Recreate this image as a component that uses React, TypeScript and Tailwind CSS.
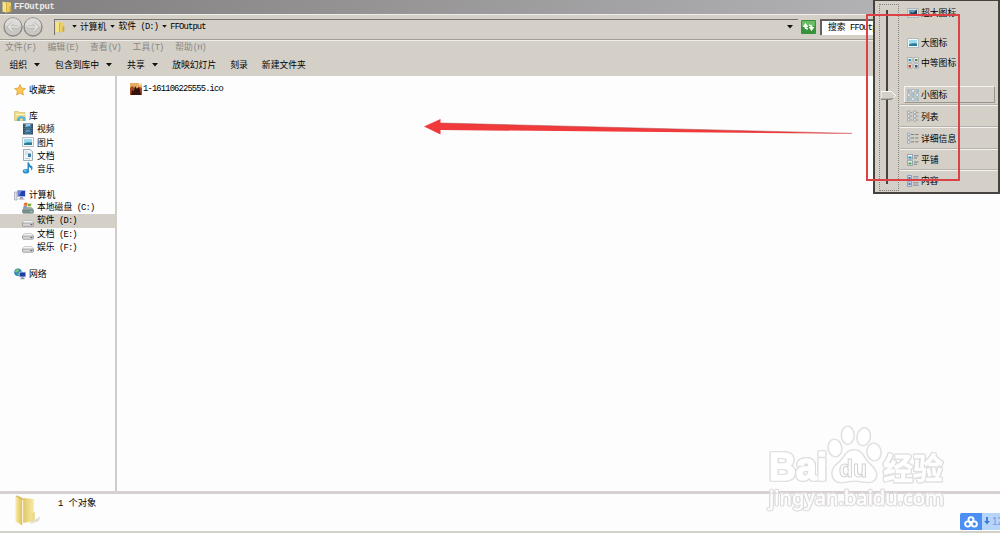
import type { ReactNode } from "react";
import clsx from "clsx";

// Chinese glyphs are full width, everything else is set in a half-width mono face.
function T({ children, className }: { children: string; className?: string }) {
  const runs = children.match(/[\u4e00-\u9fff]+|[^\u4e00-\u9fff]+/g) ?? [];
  return (
    <span className={clsx("whitespace-pre", className)}>
      {runs.map((run, i) =>
        /[\u4e00-\u9fff]/.test(run) ? (
          <span key={i}>{run}</span>
        ) : (
          <span
            key={i}
            className="font-['Liberation_Mono',monospace] text-[8.8px] tracking-[-0.84px]"
          >
            {run}
          </span>
        )
      )}
    </span>
  );
}

function Caret({ className, small }: { className?: string; small?: boolean }) {
  return (
    <svg
      viewBox="0 0 6 4"
      className={clsx("shrink-0", small ? "h-[3px] w-[5px]" : "h-[4px] w-[6px]", className)}
    >
      <path d="M0 0h6L3 3.6z" fill="#111" />
    </svg>
  );
}

function FolderIcon({ className }: { className?: string }) {
  return (
    <svg viewBox="0 0 28 32" className={className}>
      <defs>
        <linearGradient id="fold" x1="0" x2="1">
          <stop offset="0" stopColor="#f8ecaa" />
          <stop offset="1" stopColor="#dfbf58" />
        </linearGradient>
        <linearGradient id="foldBack" x1="0" x2="1">
          <stop offset="0" stopColor="#e2c768" />
          <stop offset="1" stopColor="#f7eaa6" />
        </linearGradient>
      </defs>
      <path d="M16 29l11-7-2 5-9 3z" fill="#999" opacity=".3" />
      <path d="M9 3l11 1v23l-11 2z" fill="url(#foldBack)" />
      <path d="M18 19l3-2v9l-4 2z" fill="#efdc8a" />
      <path d="M1 1l7 5.5v25L1 27z" fill="url(#fold)" />
      <path d="M1 1l2-.5 6 3-1 3z" fill="#d9bc5e" />
    </svg>
  );
}

function SmallFolderIcon() {
  return (
    <svg viewBox="0 0 10 12" className="h-[12px] w-[10px] shrink-0">
      <path d="M3.5 1L9 1.600v8.900l-5.500 1z" fill="#ead06a" />
      <path d="M7.500 5.500l1.800-.5v5.500l-2 .5z" fill="#d2aa3e" />
      <path d="M.5.500L5 2v9.700L.5 10.600z" fill="#f6e486" />
      <path d="M4.200 1.800L5 2v9.700l-.8-.2z" fill="#c9a23c" />
    </svg>
  );
}

function StarIcon() {
  return (
    <svg viewBox="0 0 12 12" className="size-[12px]">
      <path
        d="M6 .6l1.6 3.5 3.8.4-2.8 2.6.8 3.9L6 9.1 2.6 11l.8-3.9L.6 4.5l3.8-.4z"
        fill="#fcc84c"
        stroke="#d99a3c"
        strokeWidth=".8"
      />
    </svg>
  );
}

function LibraryIcon() {
  return (
    <svg viewBox="0 0 12 12" className="size-[12px]">
      <path d="M.5 1.5h4l1 1h5.500v8H.5z" fill="#f0dc88" stroke="#cdb766" strokeWidth=".6" />
      <path d="M2 4h9v1H2z" fill="#fff8d0" />
      <path d="M3 11V8.500q3-4.500 8.500-1V11H9V9Q7.500 7.500 6 9v2z" fill="#57b4dc" />
    </svg>
  );
}

function VideoIcon() {
  return (
    <svg viewBox="0 0 12 12" className="size-[12px]">
      <path d="M1 .5h10v11H1z" fill="#34495c" />
      <path d="M3.500 1h5v4.500h-5z" fill="#8ccdee" />
      <path d="M3.500 6.500h5V11h-5z" fill="#5699bd" />
      <path d="M3.500 4l5-1v2.500h-5zM3.500 9.500l5-1V11h-5z" fill="#2c6c91" />
      <path d="M2.200 1v10M9.800 1v10" stroke="#a3b1bc" strokeWidth=".6" strokeDasharray="1 1" />
    </svg>
  );
}

function PictureIcon({ dark }: { dark?: boolean }) {
  return (
    <svg viewBox="0 0 12 12" className="size-[12px]">
      <path d="M.5 1.500h11v9H.5z" fill={dark ? "#d5dfe4" : "#f3f8fa"} stroke="#9ba9ae" strokeWidth=".7" />
      <path d="M2 3h8v6H2z" fill={dark ? "#5f9cc0" : "#9bd9ec"} />
      <path d="M2 7.500q4-2 8-1V9H2z" fill="#297c99" />
      {dark && <path d="M3 5l3 1 4-3.500V7L8 8H4z" fill="#263e50" />}
    </svg>
  );
}

function DocIcon() {
  return (
    <svg viewBox="0 0 12 12" className="size-[12px]">
      <path d="M1.500.5h7l2 2v9h-9z" fill="#f0f5f8" stroke="#8999a3" strokeWidth=".8" />
      <path d="M3 3h3M3 5h3M3 9.500h5" stroke="#a9c0cc" strokeWidth=".7" />
      <path d="M6 4.500h3v3.500H6z" fill="#3c7faa" />
      <path d="M8.500.5v2h2" fill="#cfdbe1" />
    </svg>
  );
}

function MusicIcon() {
  return (
    <svg viewBox="0 0 12 12" className="size-[12px]">
      <path d="M5.500.3h1.300Q7.500 3 10 4.200 11.500 6 9.200 8.700 9.500 5.800 7 5v4.500H5.500z" fill="#2989c9" />
      <ellipse cx="4" cy="9.300" rx="3.200" ry="2.300" fill="#2f8fd0" />
      <ellipse cx="3.300" cy="8.800" rx="1.300" ry=".8" fill="#9bd7f5" />
    </svg>
  );
}

function ComputerIcon() {
  return (
    <svg viewBox="0 0 12 12" className="size-[12px]">
      <path d="M.5 3h2.500v8H.5z" fill="#dfe3ea" stroke="#8e959f" strokeWidth=".6" />
      <path d="M3 1h8.700v7H3z" fill="#c7cde0" />
      <path d="M3.800 1.800h7.200v5.400H3.800z" fill="#243fb0" />
      <path d="M3.800 1.800h4L5 7.200H3.800z" fill="#6586e0" />
      <path d="M6 8h3v1.500h1.500v1h-6v-1H6z" fill="#9ba3b4" />
    </svg>
  );
}

function DriveIcon({ system }: { system?: boolean }) {
  return (
    <svg viewBox="0 0 12 12" className="size-[12px]">
      {system && (
        <>
          <path d="M2 1.200Q4 0 5.500 1L5 4Q3.500 3.200 1.600 4z" fill="#e8702e" />
          <path d="M6 1.200q2 1 3.500 0L9 4q-1.800.8-3.500 0z" fill="#73b43c" />
          <path d="M1.500 4.500Q3.500 3.700 5 4.500v3H1z" fill="#3b8fd8" />
          <path d="M5.500 4.500q1.500.8 3.400.2L8.500 8h-3z" fill="#f5c93c" />
        </>
      )}
      <path
        d="M2.800 5.500h6.400q1 0 1.500 1l.8 2H.5l.8-2q.5-1 1.500-1z"
        fill={system ? "#8fa9a5" : "#f4f4f4"}
        stroke="#a5a5a8"
        strokeWidth=".5"
      />
      <path
        d="M.5 8h11v2.300q0 1-1 1h-9q-1 0-1-1z"
        fill={system ? "#72918f" : "#d4d4d6"}
        stroke="#808083"
        strokeWidth=".6"
      />
      <path d="M8.500 9.600h1.800" stroke={system ? "#a8f07a" : "#555"} strokeWidth="1" />
    </svg>
  );
}

function NetworkIcon() {
  return (
    <svg viewBox="0 0 12 12" className="size-[12px]">
      <circle cx="4" cy="4.200" r="3.800" fill="#2e86c4" />
      <path d="M2 1.500q3-1 3 1L3 4.500.7 4zM3 6l2-1 .5 2.500z" fill="#7cc46b" />
      <path d="M5 3.800h7v5.400H5z" fill="#c5cee3" />
      <path d="M5.700 4.500h5.600v4H5.700z" fill="#1c3ba6" />
      <path d="M7.500 9h2v1.200h1.200v1H6.300v-1h1.200z" fill="#8a94aa" />
    </svg>
  );
}

const places: ({ text: string; icon: ReactNode; child?: boolean; selected?: boolean } | null)[] = [
  { text: "收藏夹", icon: <StarIcon /> },
  null,
  { text: "库", icon: <LibraryIcon /> },
  { text: "视频", icon: <VideoIcon />, child: true },
  { text: "图片", icon: <PictureIcon />, child: true },
  { text: "文档", icon: <DocIcon />, child: true },
  { text: "音乐", icon: <MusicIcon />, child: true },
  null,
  { text: "计算机", icon: <ComputerIcon /> },
  { text: "本地磁盘 (C:)", icon: <DriveIcon system />, child: true },
  { text: "软件 (D:)", icon: <DriveIcon />, child: true, selected: true },
  { text: "文档 (E:)", icon: <DriveIcon />, child: true },
  { text: "娱乐 (F:)", icon: <DriveIcon />, child: true },
  null,
  { text: "网络", icon: <NetworkIcon /> },
];

function Sidebar() {
  return (
    <aside className="w-[115px] shrink-0 pt-[7px]">
      {places.map((p, i) =>
        p ? (
          <div
            key={i}
            className={clsx(
              "flex h-[13.15px] items-center gap-[3px]",
              p.child ? "pl-[22px]" : "pl-[14px]",
              p.selected && "bg-[#d4d0c8]"
            )}
          >
            {p.icon}
            <T>{p.text}</T>
          </div>
        ) : (
          <div key={i} className="h-[13.15px]" />
        )
      )}
    </aside>
  );
}

function GridIcon({ kind }: { kind: "medium" | "small" | "list" | "details" | "tiles" | "content" }) {
  return (
    <svg viewBox="0 0 12 12" className="size-[12px]">
      {kind === "medium" && (
        <>
          <path d="M.5.5h4.500v4.500H.5zM7 .5h4.500v4.500H7zM.5 6.800h4.500v4.500H.5zM7 6.800h4.500v4.500H7z" fill="#f5f7f7" stroke="#8b9499" strokeWidth=".6" />
          <path d="M1.500 2h2.500v2H1.500z" fill="#2f8db5" />
          <path d="M8 2h2.500v2H8z" fill="#57883e" />
          <path d="M1.500 8h2.500v2.500H1.500z" fill="#b3412d" />
          <path d="M8 8h2.500v2.500H8z" fill="#3d596c" />
        </>
      )}
      {kind === "small" && (
        <>
          <path d="M.5.5h2.600v2.600H.5zM4.700.5h2.600v2.600H4.700zM8.900.5h2.600v2.600H8.900zM.5 4.700h2.600v2.600H.5zM4.700 4.700h2.600v2.600H4.700zM8.900 4.700h2.600v2.600H8.900zM.5 8.900h2.600v2.600H.5zM4.700 8.900h2.600v2.600H4.700zM8.900 8.900h2.600v2.600H8.900z" fill="#f2f9fc" stroke="#7f9bac" strokeWidth=".6" />
          <path d="M1.800 1.200v1.500M6 5.200v1.500M10.200 9.400v1.500M10.200 1.200v1.500M1.800 9.400v1.500" stroke="#3a7193" strokeWidth=".8" />
        </>
      )}
      {kind === "list" && (
        <>
          <path d="M.5 1h2.500v2.500H.5zM6.500 1h2.500v2.500H6.500zM.5 4.800h2.500v2.500H.5zM6.500 4.800h2.500v2.500H6.500zM.5 8.600h2.500v2.500H.5zM6.500 8.600h2.500v2.500H6.500z" fill="#eaf0f2" stroke="#7d8b98" strokeWidth=".6" />
          <path d="M3.500 2.500h1.800M9.500 2.500h2M3.500 6h1.800M9.500 6h2M3.500 10h1.800M9.500 10h2" stroke="#868b8e" strokeWidth=".8" />
        </>
      )}
      {kind === "details" && (
        <>
          <path d="M.5 1h2.500v2.500H.5zM.5 4.800h2.500v2.500H.5zM.5 8.600h2.500v2.500H.5z" fill="#e3e9f3" stroke="#7d8da8" strokeWidth=".6" />
          <path d="M4 2.500h7.500M4 6h7.500M4 9.800h7.500" stroke="#707478" strokeWidth=".9" strokeDasharray="3.200 1" />
        </>
      )}
      {kind === "tiles" && (
        <>
          <path d="M.5.5h5v4.700h-5zM.5 6.700h5v4.700h-5z" fill="#f4f9fb" stroke="#6f8a9b" strokeWidth=".7" />
          <path d="M1.500 2.500h3v2h-3z" fill="#2788b6" />
          <path d="M1.500 8.500h3v2h-3z" fill="#4f9b4f" />
          <path d="M7 1.800h4.500M7 4h3M7 8h4.500M7 10.200h3" stroke="#666a6c" strokeWidth=".8" />
        </>
      )}
      {kind === "content" && (
        <>
          <path d="M.5.5h4v4.700h-4zM.5 6.700h4v4.700h-4z" fill="#cfdcf0" stroke="#7187aa" strokeWidth=".7" />
          <path d="M1.500 2h2v2h-2zM1.500 8h2v2h-2z" fill="#4c73aa" />
          <path d="M6 1.500h5.500M6 3h5.500M6 4.500h5.500M6 7.500h5.500M6 9h5.500M6 10.500h5.500" stroke="#8990ac" strokeWidth=".8" />
        </>
      )}
    </svg>
  );
}

const viewModes: { text: string; icon: ReactNode; box: string }[] = [
  { text: "超大图标", icon: <PictureIcon dark />, box: "h-[19px]" },
  { text: "大图标", icon: <PictureIcon />, box: "mt-[11px] h-[19px]" },
  { text: "中等图标", icon: <GridIcon kind="medium" />, box: "mt-[1px] h-[19px]" },
  {
    text: "小图标",
    icon: <GridIcon kind="small" />,
    box: "mt-[14px] mr-[3px] ml-[4px] h-[17px] border border-t-[#f4f2ee] border-l-[#f4f2ee] border-r-[#98958f] border-b-[#98958f] !pl-[2px]",
  },
  { text: "列表", icon: <GridIcon kind="list" />, box: "mt-[2px] h-[22px] border-t border-[#f4f2ee] pb-[1px] shadow-[0_-1px_0_#b5b2ac]" },
  { text: "详细信息", icon: <GridIcon kind="details" />, box: "h-[22px] border-t border-[#f4f2ee] pb-[1px] shadow-[0_-1px_0_#b5b2ac]" },
  { text: "平铺", icon: <GridIcon kind="tiles" />, box: "h-[21px] border-t border-[#f4f2ee] pb-[1px] shadow-[0_-1px_0_#b5b2ac]" },
  { text: "内容", icon: <GridIcon kind="content" />, box: "h-[21px] border-t border-[#f4f2ee] pb-[1px] shadow-[0_-1px_0_#b5b2ac]" },
];

function ViewMenu() {
  return (
    <div className="absolute top-0 left-[873px] flex h-[194px] w-[127px] border-x-2 border-t border-b-2 border-[#45423f] bg-[#d4d0c8]">
      <div className="relative mt-[3px] ml-[4px] h-[187px] w-[20px] shrink-0 border border-dotted border-[#85827d]">
        <div className="mt-[5px] ml-[6px] h-[174px] w-[2px] bg-[#45423f]" />
        <svg viewBox="0 0 15 9" className="absolute top-[86px] left-[1px] h-[9px] w-[15px]">
          <path d="M0 .5h10.500L14.500 4.500 10.500 8.500H0z" fill="#d4d0c8" />
          <path d="M0 8V.5h10.500l4 4-3 3" fill="none" stroke="#fff" />
          <path d="M0 8.200h10.500l1.500-1.500" fill="none" stroke="#696660" />
        </svg>
      </div>
      <div className="ml-[1px] min-w-0 flex-1 pt-[2px]">
        {viewModes.map((m) => (
          <div key={m.text} className={clsx("flex items-center gap-[2px] pl-[7px]", m.box)}>
            {m.icon}
            <T>{m.text}</T>
          </div>
        ))}
      </div>
    </div>
  );
}

function NavButton({ back }: { back?: boolean }) {
  const arrow = back ? "M15 10H5.500M9.500 6l-4 4 4 4" : "M5 10h9.500M10.500 6l4 4-4 4";
  return (
    <svg viewBox="0 0 20 20" className="size-[20px]">
      <circle cx="10" cy="10" r="9" fill="#c9c7c3" stroke="#8a8884" strokeWidth="1.300" />
      <path d="M2 9a8 8 0 0 1 16 0q-8 3-16 0z" fill="#dddbd7" />
      <path d={arrow} fill="none" stroke="#b5b3af" strokeWidth="3" />
      <path d={arrow} fill="none" stroke="#e6e4e0" strokeWidth="1.600" />
    </svg>
  );
}

// White lettering with a thin grey rim.
function Watermark() {
  return (
    <svg
      viewBox="0 0 190 90"
      className="absolute top-[423px] left-[762px] h-[90px] w-[190px] [filter:drop-shadow(1px_0_0_#dedbdb)_drop-shadow(-1px_0_0_#dedbdb)_drop-shadow(0_1px_0_#e3e0e0)_drop-shadow(0_-1px_0_#e3e0e0)]"
      fill="#fff"
      stroke="#fff"
    >
      <text
        x="7"
        y="57"
        fontSize="39"
        textLength="58"
        lengthAdjust="spacingAndGlyphs"
        strokeWidth="1.600"
        className="font-['Liberation_Sans',sans-serif] font-bold"
      >
        Bai
      </text>
      <g strokeWidth=".4">
        <ellipse cx="73" cy="25" rx="6" ry="8" transform="rotate(-10 73 25)" />
        <ellipse cx="85.700" cy="12.300" rx="5.600" ry="8.200" />
        <ellipse cx="101.700" cy="13.700" rx="5.800" ry="8.200" transform="rotate(12 101.700 13.700)" />
        <ellipse cx="112" cy="29" rx="6.200" ry="8" transform="rotate(-8 112 29)" />
        <path d="M92 27.500C84 27 83 36 76 41C69 46 69 56 76 58.500C82 60 86 57 92 57.500C100 57 106 60.500 111 57.500C117 53 113 46 107 41C101 36 101 28 92 27.500z" />
      </g>
      <text
        x="77"
        y="54"
        fontSize="23"
        textLength="28"
        lengthAdjust="spacingAndGlyphs"
        stroke="#d6d3d3"
        strokeWidth="1.100"
        className="font-['Liberation_Sans',sans-serif] font-bold"
      >
        du
      </text>
      <text
        x="121"
        y="55.500"
        fontSize="30"
        textLength="60"
        strokeWidth=".5"
        className="font-['Noto_Sans_CJK_SC',sans-serif] font-bold"
      >
        经验
      </text>
      <text
        x="7"
        y="82"
        fontSize="20"
        textLength="175"
        lengthAdjust="spacingAndGlyphs"
        strokeWidth=".3"
        className="font-['Noto_Sans',sans-serif]"
      >
        jingyan.baidu.com
      </text>
    </svg>
  );
}

export default function App() {
  return (
    <div className="relative flex h-[533px] w-[1000px] flex-col overflow-hidden bg-[#fdfdfd] font-['Noto_Sans_CJK_SC',sans-serif] text-[8.8px] leading-[13px] text-black">
      <header className="flex h-[14px] shrink-0 items-center gap-[2px] bg-linear-to-r from-[#817f80] to-[#b9b8ba] pl-[2px] text-[#efeeec]">
        <SmallFolderIcon />
        <T className="pb-[2px] font-bold tracking-normal [&>span]:tracking-[-0.2px]">FFOutput</T>
      </header>

      <div className="flex h-[26px] shrink-0 items-center border-t border-b border-t-[#f0eeea] border-b-[#a19e98] bg-[#d4d0c8] pl-[3px]">
        <div className="flex">
          <NavButton back />
          <NavButton />
        </div>
        <div className="ml-[11px] flex h-[16px] w-[744px] items-center border-t border-l border-[#77746f] pb-[2px]">
          <SmallFolderIcon />
          <Caret small className="ml-[7px]" />
          <T className="ml-[3px]">计算机</T>
          <Caret small className="mr-[3px] ml-[4px]" />
          <T>软件 (D:)</T>
          <Caret small className="mr-[3px] ml-[4px]" />
          <T>FFOutput</T>
          <Caret className="mr-[5px] ml-auto" />
        </div>
        <svg viewBox="0 0 15 14" className="ml-[3px] h-[14px] w-[15px]">
          <rect width="15" height="14" rx="1" fill="#36933c" />
          <path d="M1 1h13v5H1z" fill="#69bd62" />
          <path d="M4.500 3L1.500 7H3.500v.5q0 2 3.500 2V8q-1.500 0-1.500-1H7.500zM10.500 11l3-4H11.500v-.5q0-2-3.500-2V6q1.500 0 1.500 1H7.500z" fill="#f7fff3" />
        </svg>
        <div className="ml-[4px] flex h-[16px] w-[60px] items-center overflow-hidden border-t-2 border-l-2 border-[#63605d] bg-[#fdfdfd] pb-[2px] pl-[6px]">
          <T>搜索 FFOutput</T>
        </div>
      </div>

      <nav className="flex h-[14px] shrink-0 items-center gap-[11.600px] border-t border-[#efede9] bg-[#d4d0c8] pb-[1px] pl-[5px] text-[#8a8782]">
        {["文件(F)", "编辑(E)", "查看(V)", "工具(T)", "帮助(H)"].map((m) => (
          <T key={m}>{m}</T>
        ))}
      </nav>

      <div className="flex h-[22px] shrink-0 items-center bg-[#d4d0c8] pb-[1px] pl-[9.500px]">
        <T>组织</T>
        <Caret className="ml-[7px]" />
        <T className="ml-[15px]">包含到库中</T>
        <Caret className="ml-[7px]" />
        <T className="ml-[15px]">共享</T>
        <Caret className="ml-[7px]" />
        <T className="ml-[14.500px]">放映幻灯片</T>
        <T className="ml-[14px]">刻录</T>
        <T className="ml-[14px]">新建文件夹</T>
      </div>

      <div className="flex h-[415px] shrink-0">
        <Sidebar />
        <main className="flex-1 border-l-2 border-[#d0cdc8] pt-[5px] pl-[13px]">
          <div className="flex items-center">
            <svg viewBox="0 0 12 12" className="size-[12px]">
              <path d="M0 0h12v12H0z" fill="#a04b22" />
              <path d="M0 0h12v5L9 4 6 6 2 3 0 5z" fill="#e6ad62" />
              <path d="M1 12l1-5 2 1 1-5 2 3 2-2 1 4 1 4z" fill="#35120c" />
              <path d="M8 0l2 3 2-1V0z" fill="#f8e0a0" />
            </svg>
            <T className="ml-[1px]">1-161106225555.ico</T>
          </div>
        </main>
      </div>

      <footer className="flex h-[42px] shrink-0 items-start border-t-[3px] border-b-[2px] border-t-[#d6d1d0] border-b-[#d3d0c8] pl-[14px]">
        <FolderIcon className="mt-[1px] h-[31px] w-[28px]" />
        <T className="mt-[2px] ml-[16px] text-[9.300px] [word-spacing:1.500px]">1 个对象</T>
      </footer>

      <svg viewBox="0 0 430 18" className="absolute top-[118px] left-[424px] h-[18px] w-[430px]">
        <path d="M0 8.500L16.500 1v4L428 15.400v.4L16.500 12v4.500z" fill="#f03a3c" />
        <path d="M16.500 5L428 15.400" stroke="#b23a3c" strokeWidth=".5" />
      </svg>

      <ViewMenu />
      <div className="absolute top-[14px] left-[866px] h-[167px] w-[94px] border-2 border-[#dc4145]" />

      <Watermark />

      <div className="absolute top-[513px] left-[960px] flex h-[17px] w-[40px] overflow-hidden rounded-l-[2px] bg-[#b7d5fb]">
        <div className="flex w-[22px] shrink-0 items-center justify-center bg-[#4c8ff2]">
          <svg viewBox="0 0 14 12" className="h-[12px] w-[14px]" fill="none" stroke="#fff" strokeWidth="1.900">
            <circle cx="7" cy="3.600" r="2.500" />
            <circle cx="3.700" cy="8" r="2.600" />
            <circle cx="10.300" cy="8" r="2.600" />
          </svg>
        </div>
        <svg viewBox="0 0 6 8" className="mt-[4px] ml-[2px] h-[8px] w-[6px] shrink-0">
          <path d="M2 0h2v4h2L3 7.500 0 4h2z" fill="#3d7dd6" />
        </svg>
        <span className="ml-[2px] font-['Liberation_Sans',sans-serif] text-[10px] leading-[18px] whitespace-nowrap text-[#6b9fe4]">
          12
        </span>
      </div>
    </div>
  );
}
